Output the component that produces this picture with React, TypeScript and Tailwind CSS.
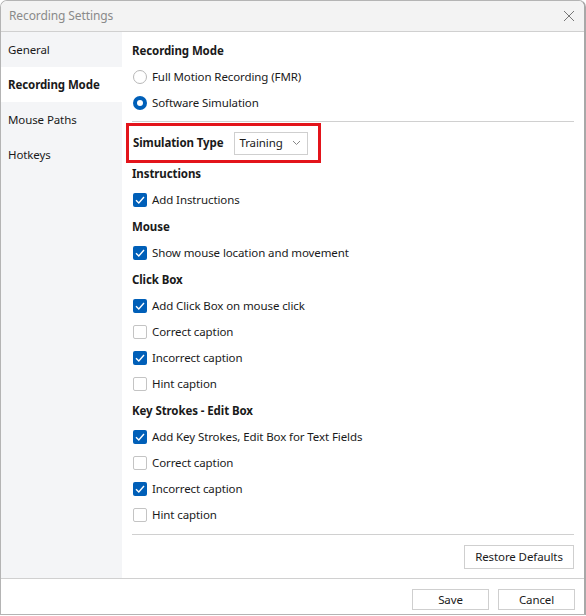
import React from "react";

const font = { fontFamily: '"Noto Sans", "Open Sans", sans-serif' };

function Check({ checked }: { checked: boolean }) {
  if (checked) {
    return (
      <span className="flex h-[14px] w-[14px] shrink-0 items-center justify-center rounded-[2px] bg-[#005fb8]">
        <svg width="10" height="10" viewBox="0 0 10 10">
          <path d="M1 5.2 L3.8 8 L9 2" fill="none" stroke="white" strokeWidth="1.4" />
        </svg>
      </span>
    );
  }
  return <span className="h-[14px] w-[14px] shrink-0 rounded-[2px] border border-[#c4c4c4] bg-white" />;
}

function Radio({ checked }: { checked: boolean }) {
  return checked ? (
    <span className="flex h-[14px] w-[14px] shrink-0 items-center justify-center rounded-full bg-[#005fb8]">
      <span className="h-[6px] w-[6px] rounded-full bg-white" />
    </span>
  ) : (
    <span className="h-[14px] w-[14px] shrink-0 rounded-full border border-[#b8b8b8] bg-white" />
  );
}

function Heading({ children }: { children: React.ReactNode }) {
  return <div className="flex h-[27px] items-center font-bold text-[#1a1a1a]">{children}</div>;
}

function Row({ checked, label, radio }: { checked: boolean; label: string; radio?: boolean }) {
  return (
    <div className="flex h-[26px] items-center gap-[5px] pl-px">
      {radio ? <Radio checked={checked} /> : <Check checked={checked} />}
      <span>{label}</span>
    </div>
  );
}

const nav = ["General", "Recording Mode", "Mouse Paths", "Hotkeys"];

export default function App() {
  return (
    <div className="h-[616px] w-[586px] bg-white text-[11.5px] tracking-[-0.1px] text-[#1a1a1a]" style={font}>
      <div className="flex h-[615px] flex-col overflow-hidden rounded-t-[7px] border border-r-2 border-[#b4b4b4] border-r-[#a8a8a8]">
        {/* title bar */}
        <div className="flex h-[31px] shrink-0 items-center justify-between border-b border-[#d0d0d0] bg-[#f3f3f3] pl-2 pr-[4px]">
          <span className="text-[12px] text-[#8a8a8a]">Recording Settings</span>
          <svg width="22" height="22" viewBox="0 0 22 22">
            <path d="M6 6 L16 16 M16 6 L6 16" stroke="#777" strokeWidth="1" />
          </svg>
        </div>

        <div className="flex min-h-0 flex-1">
          {/* sidebar */}
          <div className="w-[121px] shrink-0 bg-[#f4f5f7]">
            {nav.map((n) => (
              <div
                key={n}
                className={`flex h-[35px] items-center pl-[7px] ${
                  n === "Recording Mode" ? "bg-white font-bold" : ""
                }`}
              >
                {n}
              </div>
            ))}
          </div>

          {/* content */}
          <div className="flex flex-1 flex-col pl-[10px] pr-[10px] pt-[6px]">
            <div className="flex h-[26px] items-center font-bold">Recording Mode</div>
            <Row radio checked={false} label="Full Motion Recording (FMR)" />
            <Row radio checked label="Software Simulation" />
            <div className="mt-[5px] h-px bg-[#d0d0d0]" />

            <div className="ml-[-6px] mt-px flex h-[40px] w-[195px] items-center border-[3px] border-[#e3141b] pl-[4px]">
              <span className="font-bold">Simulation Type</span>
              <div className="ml-[11px] flex h-[23px] w-[74px] items-center justify-between border border-[#cfcfcf] pl-[4px] pr-[6px]">
                <span>Training</span>
                <svg width="9" height="6" viewBox="0 0 9 6">
                  <path d="M1 1 L4.5 4.5 L8 1" fill="none" stroke="#888" strokeWidth="1" />
                </svg>
              </div>
            </div>

            <div className="mt-[-3px]">
              <Heading>Instructions</Heading>
              <Row checked label="Add Instructions" />
              <Heading>Mouse</Heading>
              <Row checked label="Show mouse location and movement" />
              <Heading>Click Box</Heading>
              <Row checked label="Add Click Box on mouse click" />
              <Row checked={false} label="Correct caption" />
              <Row checked label="Incorrect caption" />
              <Row checked={false} label="Hint caption" />
              <Heading>Key Strokes - Edit Box</Heading>
              <Row checked label="Add Key Strokes, Edit Box for Text Fields" />
              <Row checked={false} label="Correct caption" />
              <Row checked label="Incorrect caption" />
              <Row checked={false} label="Hint caption" />
            </div>

            <div className="mt-[6px] h-px bg-[#d0d0d0]" />
            <div className="mt-[10px] flex justify-end">
              <button className="h-[24px] w-[110px] border border-[#cfcfcf] bg-white">Restore Defaults</button>
            </div>
          </div>
        </div>

        {/* footer */}
        <div className="flex h-[36px] shrink-0 items-start justify-end gap-[9px] border-t border-[#d0d0d0] pr-[9px] pt-[10px]">
          <button className="h-[21px] w-[77px] border border-[#cfcfcf] bg-white">Save</button>
          <button className="h-[21px] w-[77px] border border-[#cfcfcf] bg-white">Cancel</button>
        </div>
      </div>
    </div>
  );
}
